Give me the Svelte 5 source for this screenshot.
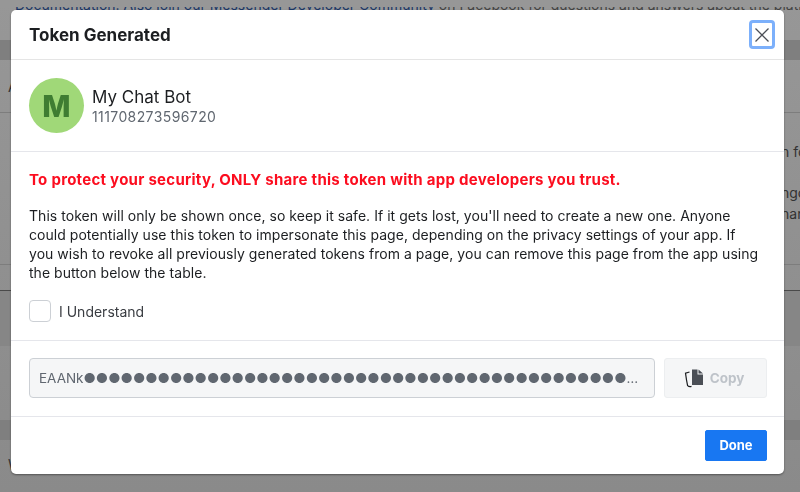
<script>
  const intro = "This token will only be shown once, so keep it safe. If it gets lost, you'll need to create a new one. Anyone could potentially use this token to impersonate this page, depending on the privacy settings of your app. If you wish to revoke all previously generated tokens from a page, you can remove this page from the app using the button below the table.";
  const dots = "●".repeat(60);
</script>

<div class="page">
  <div class="top-bar"></div>
  <div class="top-text">
    <span class="link">Documentation. Also join our Messenger Developer Community</span> on Facebook for questions and answers about the platform and more
  </div>
  <div class="band"></div>
  <div class="row">A</div>
  <div class="side-copy">
    <div>h for</div>
    <div class="copy-two">ngo</div>
    <div>har</div>
  </div>
  <div class="row-rule"></div>
  <div class="row-dark"></div>
  <div class="band band-low"></div>
  <div class="bottom-text">W</div>
</div>

<div class="modal">
  <header class="modal-head">
    <h2>Token Generated</h2>
    <button class="close" aria-label="Close">
      <svg width="14" height="14" viewBox="0 0 14 14">
        <path d="M0.5 0.5 L13.5 13.5 M13.5 0.5 L0.5 13.5" stroke="#4b4f56" stroke-width="1.3" fill="none" />
      </svg>
    </button>
  </header>

  <section class="page-info">
    <div class="avatar">M</div>
    <div class="page-text">
      <div class="name">My Chat Bot</div>
      <div class="page-id">111708273596720</div>
    </div>
  </section>

  <section class="notice">
    <p class="warning">To protect your security, ONLY share this token with app developers you trust.</p>
    <p class="intro">{intro}</p>
    <label class="understand">
      <span class="checkbox"></span>
      I Understand
    </label>
  </section>

  <section class="token-row">
    <div class="token">EAANk{dots}</div>
    <button class="copy" disabled>
      <svg width="19" height="19" viewBox="0 0 19 19">
        <path d="M8 0.5 H13.5 V5.5 H19 V16 H8 Z" fill="#4b4f56" />
        <path d="M14.5 0.5 L19 4.5 H14.5 Z" fill="#4b4f56" />
        <path d="M5.5 3 L1.5 4.2 C2 8 2.8 13 3.6 16.6 C4.6 17.6 6 17.8 7.5 17.4" stroke="#1c1e21" stroke-width="1.2" fill="none" />
      </svg>
      Copy
    </button>
  </section>

  <footer class="modal-foot">
    <button class="done">Done</button>
  </footer>
</div>

<style>
  :global(body) {
    background: #8b8b8b;
    font-family: Inter, "Liberation Sans", sans-serif;
  }

  .page {
    position: fixed;
    inset: 0;
    background: linear-gradient(#979797, #8a8a8a);
    overflow: hidden;
    color: #333;
    font-size: 14px;
  }

  .top-bar {
    position: relative;
    z-index: 1;
    height: 7px;
    background: #979797;
  }

  .top-text {
    font-size: 14px;
    line-height: 16px;
    margin-top: -10px;
    margin-left: 15px;
    white-space: nowrap;
    color: #444;
  }

  .link {
    color: #1c3767;
  }

  .band {
    margin-top: 27px;
    height: 20px;
    background: #7f7f7f;
  }

  .row {
    height: 52px;
    line-height: 54px;
    padding-left: 8px;
    border-bottom: 1px solid #7d7d7d;
    white-space: nowrap;
  }

  .side-copy {
    margin: 28px 0 0 781px;
    line-height: 21px;
    white-space: nowrap;
  }

  .copy-two {
    margin-top: 20px;
  }

  .row-rule {
    margin-top: 40px;
    border-top: 1px solid #7d7d7d;
  }

  .row-dark {
    margin-top: 25px;
    height: 55px;
    background: #868686;
    border-top: 1px solid #4a4a4a;
  }

  .band-low {
    margin-top: 74px;
  }

  .bottom-text {
    margin-top: 16px;
    padding-left: 8px;
    line-height: 18px;
    white-space: nowrap;
  }

  .modal {
    position: absolute;
    left: 11px;
    top: 10px;
    width: 773px;
    height: 464px;
    background: #fff;
    border-radius: 5px;
    box-shadow: 0 1px 2px rgba(0, 0, 0, 0.4);
    display: flex;
    flex-direction: column;
    color: #1c1e21;
  }

  .modal-head {
    height: 50px;
    box-sizing: border-box;
    padding: 0 9px 0 18px;
    display: flex;
    align-items: center;
    justify-content: space-between;
    border-bottom: 1px solid #e5e5e5;
  }

  h2 {
    margin: 0;
    font-size: 17px;
    font-weight: 700;
  }

  .close {
    width: 26px;
    height: 29px;
    padding: 0;
    display: flex;
    align-items: center;
    justify-content: center;
    background: #fff;
    border: 3px solid #7cb0fb;
    border-radius: 4px;
  }

  .page-info {
    height: 92px;
    box-sizing: border-box;
    padding: 0 18px;
    display: flex;
    align-items: center;
    gap: 8px;
    border-bottom: 1px solid #e5e6eb;
  }

  .avatar {
    width: 55px;
    height: 55px;
    border-radius: 50%;
    background: #a0d878;
    color: #3f7d32;
    font-size: 30px;
    font-weight: 800;
    display: flex;
    align-items: center;
    justify-content: center;
  }

  .page-text {
    margin-top: 2px;
  }

  .name {
    font-size: 17px;
    line-height: 21px;
  }

  .page-id {
    font-size: 14px;
    line-height: 18px;
    letter-spacing: 0.4px;
    color: #606770;
  }

  .notice {
    flex: 1;
    padding: 0 18px;
    border-bottom: 1px solid #e5e6eb;
  }

  .warning {
    margin: 19px 0 0;
    font-size: 15px;
    line-height: 18px;
    font-weight: 700;
    letter-spacing: 0.27px;
    color: #fc0d1f;
  }

  .intro {
    margin: 17px 0 0;
    padding-right: 5px;
    font-size: 14px;
    line-height: 19px;
    letter-spacing: 0.04px;
  }

  .understand {
    margin-top: 18px;
    display: flex;
    align-items: center;
    gap: 8px;
    font-size: 14px;
    color: #3a3d42;
  }

  .checkbox {
    width: 22px;
    height: 22px;
    box-sizing: border-box;
    border: 1px solid #ccd0d5;
    border-radius: 4px;
  }

  .token-row {
    height: 76px;
    padding: 0 17px 1px 18px;
    display: flex;
    align-items: center;
    gap: 9px;
    border-bottom: 1px solid #e5e6eb;
    box-sizing: border-box;
  }

  .token {
    flex: 1;
    min-width: 0;
    height: 40px;
    box-sizing: border-box;
    padding: 0 13px 0 9px;
    line-height: 38px;
    background: #f5f6f7;
    border: 1px solid #ccd0d5;
    border-radius: 4px;
    color: #606770;
    font-size: 13.5px;
    white-space: nowrap;
    overflow: hidden;
    text-overflow: ellipsis;
  }

  .copy {
    width: 103px;
    height: 40px;
    padding: 0 3px 0 0;
    display: flex;
    align-items: center;
    justify-content: center;
    gap: 7px;
    background: #f5f6f7;
    border: 1px solid #eceef0;
    border-radius: 3px;
    color: #bec3c9;
    font: 700 13.5px Inter, "Liberation Sans", sans-serif;
  }

  .modal-foot {
    height: 57px;
    padding: 0 17px 1px;
    display: flex;
    align-items: center;
    justify-content: flex-end;
    box-sizing: border-box;
  }

  .done {
    width: 62px;
    height: 31px;
    padding: 0;
    background: #1877f2;
    border: 1px solid #1877f2;
    border-radius: 2px;
    color: #fff;
    font: 700 13px Inter, "Liberation Sans", sans-serif;
  }
</style>
